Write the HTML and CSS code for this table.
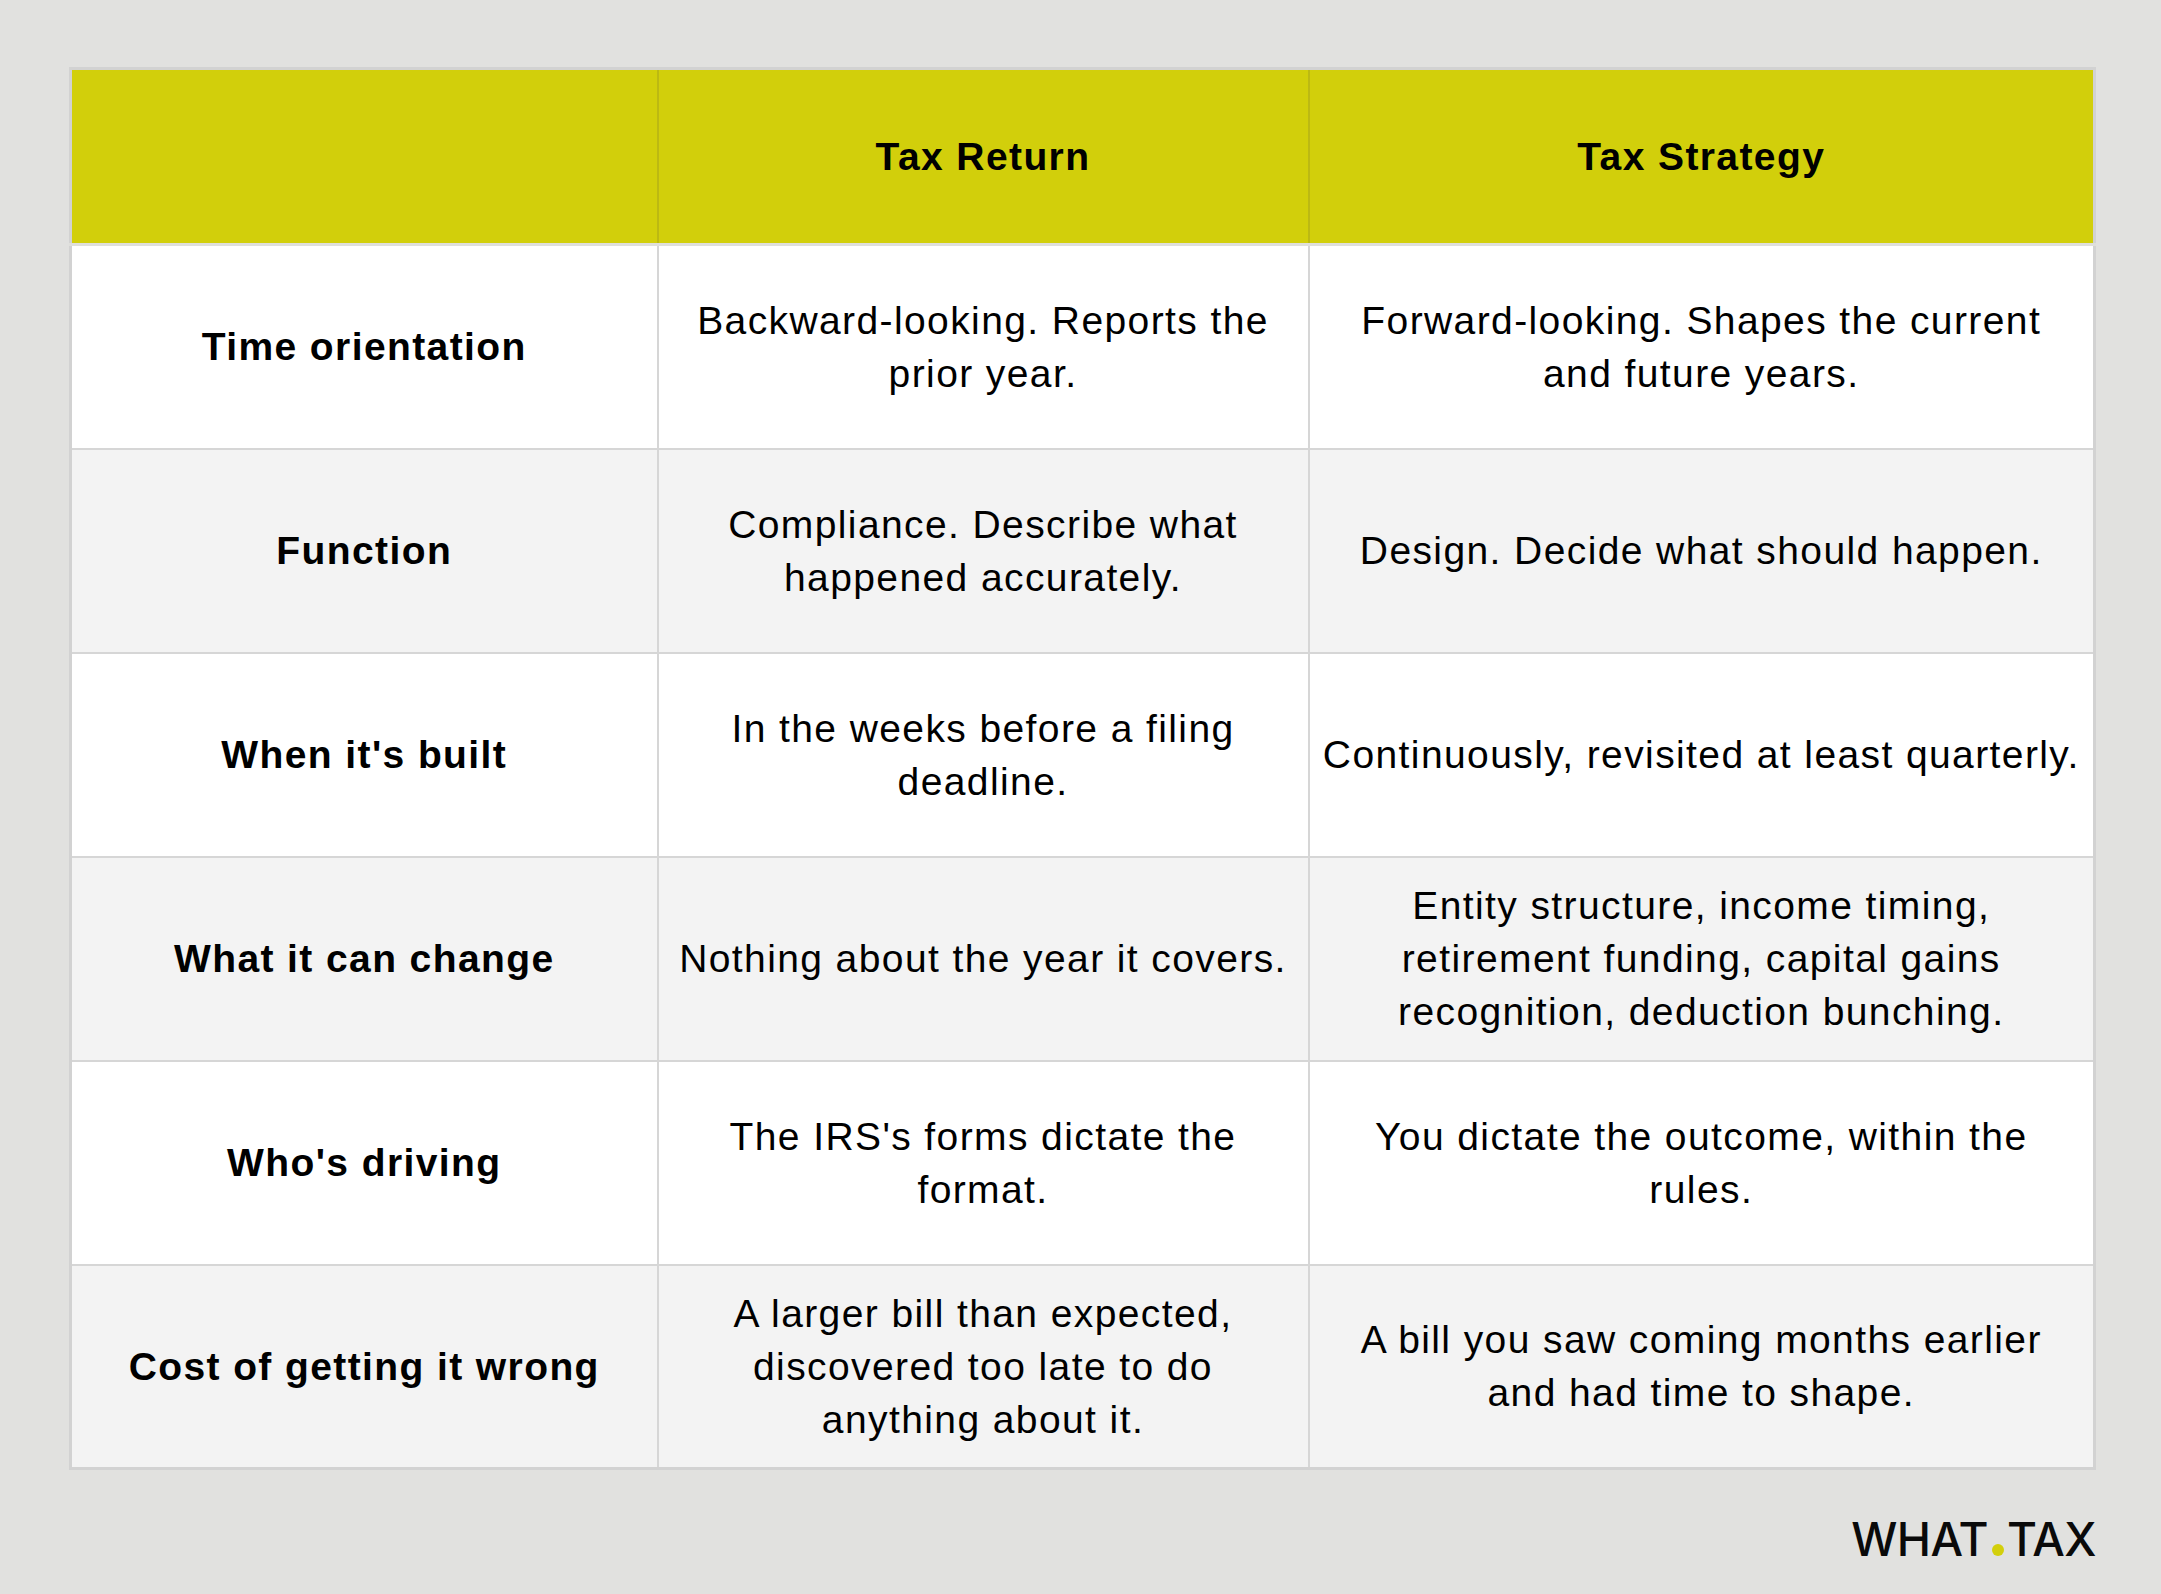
FILE: index.html
```html
<!DOCTYPE html>
<html lang="en">
<head>
<meta charset="utf-8">
<title>Tax Return vs Tax Strategy</title>
<link rel="stylesheet" href="styles.css">
</head>
<body>
<main class="page">
  <table class="compare">
    <colgroup>
      <col class="c-label">
      <col class="c-return">
      <col class="c-strategy">
    </colgroup>
    <thead>
      <tr>
        <th></th>
        <th>Tax Return</th>
        <th>Tax Strategy</th>
      </tr>
    </thead>
    <tbody>
      <tr>
        <th>Time orientation</th>
        <td>Backward-looking. Reports the<br>prior year.</td>
        <td>Forward-looking. Shapes the current<br>and future years.</td>
      </tr>
      <tr>
        <th>Function</th>
        <td>Compliance. Describe what<br>happened accurately.</td>
        <td>Design. Decide what should happen.</td>
      </tr>
      <tr>
        <th>When it's built</th>
        <td>In the weeks before a filing<br>deadline.</td>
        <td>Continuously, revisited at least quarterly.</td>
      </tr>
      <tr>
        <th>What it can change</th>
        <td>Nothing about the year it covers.</td>
        <td>Entity structure, income timing,<br>retirement funding, capital gains<br>recognition, deduction bunching.</td>
      </tr>
      <tr>
        <th>Who's driving</th>
        <td>The IRS's forms dictate the<br>format.</td>
        <td>You dictate the outcome, within the<br>rules.</td>
      </tr>
      <tr>
        <th>Cost of getting it wrong</th>
        <td>A larger bill than expected,<br>discovered too late to do<br>anything about it.</td>
        <td>A bill you saw coming months earlier<br>and had time to shape.</td>
      </tr>
    </tbody>
  </table>
  <footer class="brand">
    <span class="brand-word">WHAT</span><span class="brand-dot"></span><span class="brand-word">TAX</span>
  </footer>
</main>
</body>
</html>
```
FILE: styles.css
```css
html, body {
  margin: 0;
  padding: 0;
  background: #e1e1df;
}

body {
  font-family: "Liberation Sans", Arial, sans-serif;
  color: #000;
}

.page {
  padding: 67px 0 0 69px;
  width: 2024px;
}

.compare {
  width: 2024px;
  table-layout: fixed;
  border-collapse: collapse;
  border: 3px solid #d2d2d2;
  font-size: 39px;
  line-height: 53px;
  letter-spacing: 1.4px;
}

.c-label { width: 587px; }
.c-return { width: 651px; }
.c-strategy { width: 786px; }

.compare th,
.compare td {
  text-align: center;
  vertical-align: middle;
  white-space: nowrap;
  padding: 0 10px;
  border: 2px solid #d6d6d6;
}

.compare td {
  font-weight: 400;
}

.compare th {
  font-weight: 700;
}

.compare thead tr {
  height: 176px;
  background: #d2cf0b;
}

.compare thead th {
  border: 2px solid #bcb913;
  border-bottom: 3px solid #dfdfdb;
}

.compare tbody tr {
  height: 204px;
}

.compare tbody tr:nth-child(odd) {
  background: #ffffff;
}

.compare tbody tr:nth-child(even) {
  background: #f3f3f3;
}

.brand {
  display: flex;
  justify-content: flex-end;
  align-items: baseline;
  margin-top: 40px;
  margin-right: -3px;
  font-family: "Inter", "Liberation Sans", sans-serif;
  font-weight: 500;
  font-size: 46px;
  line-height: 58px;
  letter-spacing: -0.6px;
  color: #0a0a0a;
}

.brand-dot {
  display: inline-block;
  width: 12px;
  height: 12px;
  border-radius: 50%;
  background: #d3cf0b;
  margin: 0 3px 0 4px;
}
```
